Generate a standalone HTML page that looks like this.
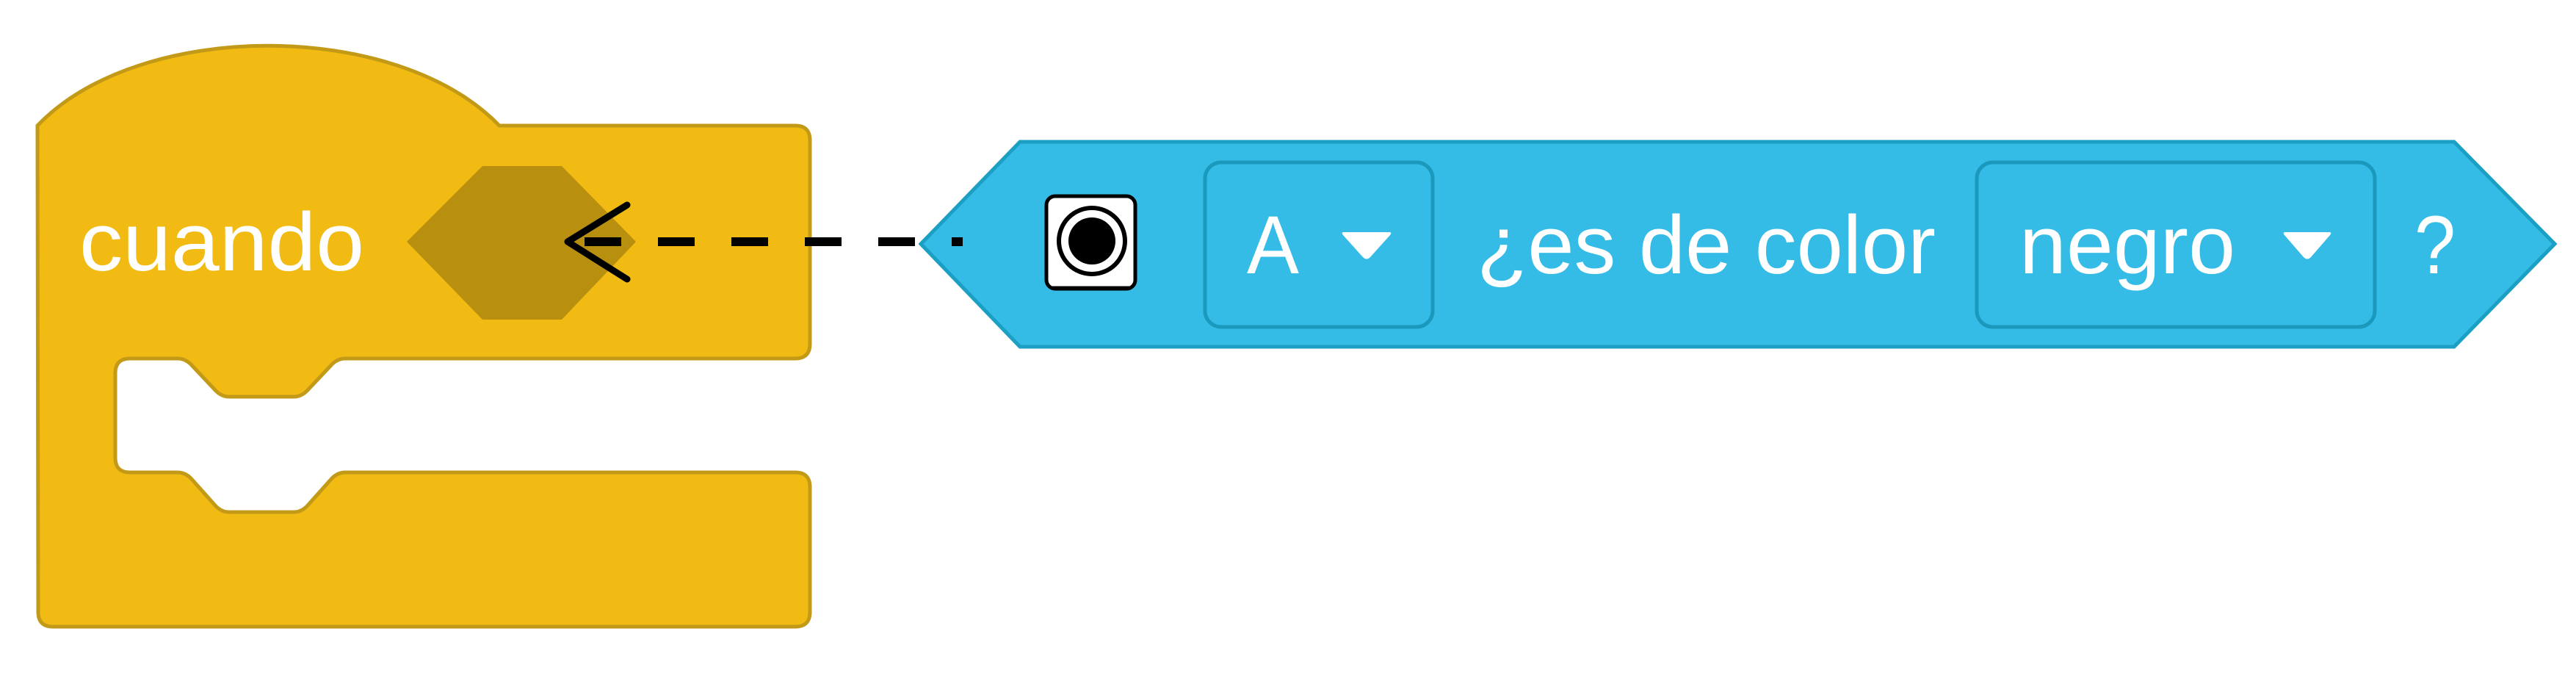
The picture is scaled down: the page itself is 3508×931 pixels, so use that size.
<!DOCTYPE html>
<html><head><meta charset="utf-8"><style>
html,body{margin:0;padding:0;background:#fff;width:3508px;height:931px;overflow:hidden}
svg{display:block}
text{font-family:"Liberation Sans",sans-serif;fill:#fff}
</style></head><body>
<svg width="3508" height="931" viewBox="0 0 3508 931" xmlns="http://www.w3.org/2000/svg">
<path d="M51,171 C190,26 540,26 680,171 L1083,171 Q1103,171 1103,191 L1103,468 Q1103,488 1083,488 L470,488 Q460,488 452,496 L418,532 Q410,540 400,540 L312,540 Q302,540 294,532 L260,496 Q252,488 242,488 L177,488 Q157,488 157,508 L157,623 Q157,643 177,643 L242,643 Q252,643 260,651 L294,689 Q302,697 312,697 L400,697 Q410,697 418,689 L452,651 Q460,643 470,643 L1083,643 Q1103,643 1103,663 L1103,833 Q1103,853 1083,853 L72,853 Q52,853 52,833 Z" fill="#f2bb13" stroke="#c29a18" stroke-width="5"/>
<text x="108" y="368" font-size="112" textLength="388" lengthAdjust="spacingAndGlyphs">cuando</text>
<polygon points="554,329 657,226 765,226 866,329 765,435 657,435" fill="#b98f10"/>
<polygon points="1254,332 1389,193 3342,193 3479,332 3342,472 1389,472" fill="#35bce6" stroke="#1b9fc3" stroke-width="5" stroke-linejoin="miter"/>
<line x1="790" y1="329" x2="1311" y2="329" stroke="#000" stroke-width="12" stroke-dasharray="50,50" stroke-dashoffset="-6"/>
<polyline points="854,279 773,329 854,380" fill="none" stroke="#000" stroke-width="9" stroke-linecap="round" stroke-linejoin="round"/>
<rect x="1425" y="267" width="121" height="126" rx="12" fill="#fff" stroke="#000" stroke-width="5"/>
<line x1="1432" y1="392" x2="1540" y2="392" stroke="#000" stroke-width="5"/>
<circle cx="1487" cy="328" r="45" fill="#fff" stroke="#000" stroke-width="6"/>
<circle cx="1487" cy="328" r="32" fill="#000"/>
<rect x="1641" y="221" width="310" height="224" rx="22" fill="none" stroke="#1a99bd" stroke-width="5"/>
<text x="1698" y="372" font-size="112" textLength="71" lengthAdjust="spacingAndGlyphs">A</text>
<path d="M1830,316 L1892,316 Q1896,316 1893,320 L1866,350 Q1861,355 1856,350 L1829,320 Q1826,316 1830,316 Z" fill="#fff"/>
<text x="2011" y="372" font-size="112" textLength="625" lengthAdjust="spacingAndGlyphs">¿es de color</text>
<rect x="2692" y="221" width="542" height="224" rx="22" fill="none" stroke="#1a99bd" stroke-width="5"/>
<text x="2750" y="372" font-size="112" textLength="294" lengthAdjust="spacingAndGlyphs">negro</text>
<path d="M3112,316 L3172,316 Q3176,316 3173,320 L3147,350 Q3142,355 3137,350 L3111,320 Q3108,316 3112,316 Z" fill="#fff"/>
<text x="3288" y="372" font-size="112" textLength="56" lengthAdjust="spacingAndGlyphs">?</text>
</svg>
</body></html>
